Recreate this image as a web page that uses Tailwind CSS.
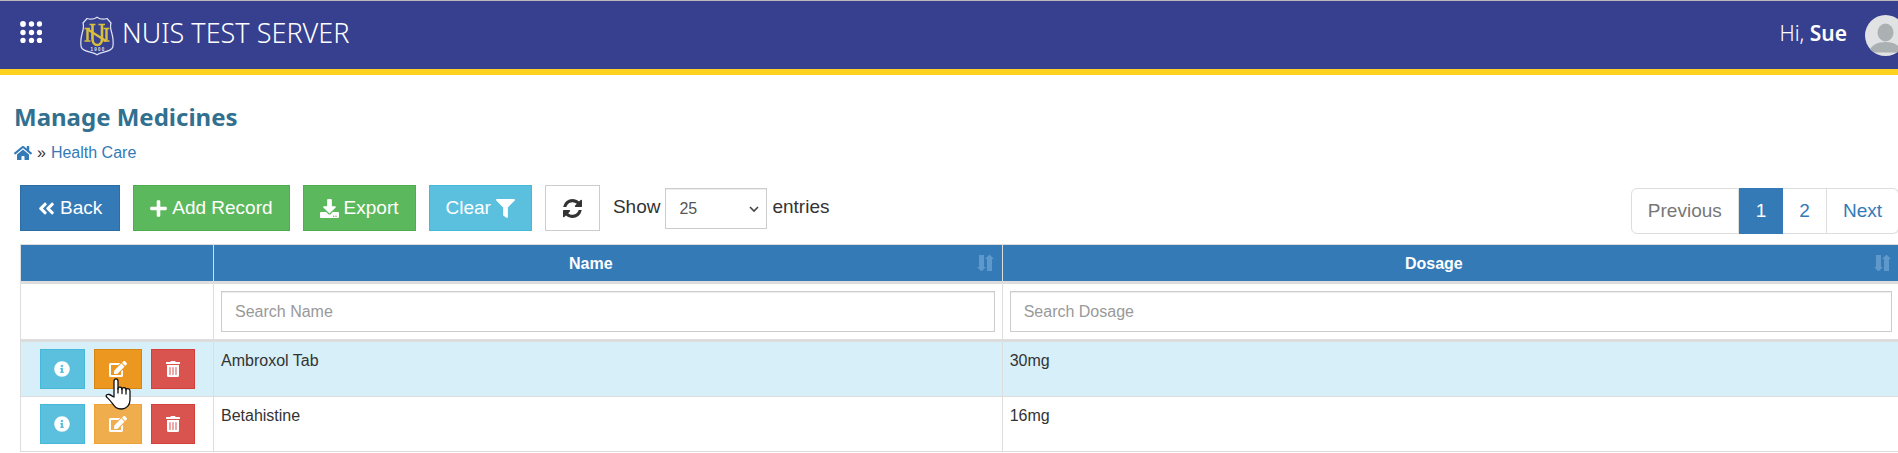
<!DOCTYPE html>
<html lang="en">
<head>
<meta charset="utf-8">
<title>Manage Medicines</title>
<script src="https://cdn.jsdelivr.net/npm/@tailwindcss/browser@4"></script>
</head>
<body class="bg-white text-[#333] font-['Liberation_Sans',Arial,sans-serif] text-base overflow-x-hidden">
<svg class="hidden" aria-hidden="true">
  <symbol id="info" viewBox="0 0 512 512"><path d="M256 8C119.043 8 8 119.083 8 256c0 136.997 111.043 248 248 248s248-111.003 248-248C504 119.083 392.957 8 256 8zm0 110c23.196 0 42 18.804 42 42s-18.804 42-42 42-42-18.804-42-42 18.804-42 42-42zm56 254c0 6.627-5.373 12-12 12h-88c-6.627 0-12-5.373-12-12v-24c0-6.627 5.373-12 12-12h12v-64h-12c-6.627 0-12-5.373-12-12v-24c0-6.627 5.373-12 12-12h64c6.627 0 12 5.373 12 12v100h12c6.627 0 12 5.373 12 12v24z"/></symbol>
  <symbol id="edit" viewBox="0 0 576 512"><path d="M402.6 83.2l90.2 90.2c3.8 3.8 3.8 10 0 13.8L274.4 405.6l-92.8 10.3c-12.4 1.4-22.9-9.1-21.5-21.5l10.3-92.8L388.8 83.2c3.8-3.8 10-3.8 13.8 0zm162-22.9l-48.8-48.8c-15.2-15.2-39.9-15.2-55.2 0l-35.4 35.4c-3.8 3.8-3.8 10 0 13.8l90.2 90.2c3.8 3.8 10 3.8 13.8 0l35.4-35.4c15.2-15.3 15.2-40 0-55.2zM384 346.2V448H64V128h229.8c3.2 0 6.2-1.3 8.5-3.5l40-40c7.6-7.6 2.2-20.5-8.5-20.5H48C21.5 64 0 85.5 0 112v352c0 26.5 21.5 48 48 48h352c26.5 0 48-21.5 48-48V306.2c0-10.7-12.9-16-20.5-8.5l-40 40c-2.2 2.3-3.5 5.3-3.5 8.5z"/></symbol>
  <symbol id="trash" viewBox="0 0 448 512"><path d="M32 464a48 48 0 0 0 48 48h288a48 48 0 0 0 48-48V128H32zm272-256a16 16 0 0 1 32 0v224a16 16 0 0 1-32 0zm-96 0a16 16 0 0 1 32 0v224a16 16 0 0 1-32 0zm-96 0a16 16 0 0 1 32 0v224a16 16 0 0 1-32 0zM432 32H312l-9.4-18.7A24 24 0 0 0 281.1 0H166.8a23.72 23.72 0 0 0-21.4 13.3L136 32H16A16 16 0 0 0 0 48v32a16 16 0 0 0 16 16h416a16 16 0 0 0 16-16V48a16 16 0 0 0-16-16z"/></symbol>
  <symbol id="sort" viewBox="0 0 17 16"><path d="M2 0h5v12h2l-4 4h-1L0 12h2zM10 16V4H8l4-4h1L17 4h-2v12z"/></symbol>
</svg>

<header class="flex items-start border-t border-t-[#b9b9b9] border-b-6 border-b-[#ffd21f] bg-[#36408f] h-[75px] pl-5 text-white font-['Noto_Sans','Open_Sans',sans-serif]">
  <button class="mt-5" aria-label="Applications">
    <svg class="size-[22px]" viewBox="0 0 22 22" fill="#fff"><circle cx="3" cy="3" r="2.900"/><circle cx="11.500" cy="3" r="2.700"/><circle cx="19.500" cy="3" r="2.700"/><circle cx="3" cy="11.500" r="2.700"/><circle cx="11.500" cy="11.500" r="2.700"/><circle cx="19.500" cy="11.500" r="2.700"/><circle cx="3" cy="19.500" r="2.700"/><circle cx="11.500" cy="19.500" r="2.700"/><circle cx="19.500" cy="19.500" r="2.700"/></svg>
  </button>
  <a href="#" class="ml-[38px] mt-3.5 flex">
    <svg class="mt-px w-[34px] h-10" viewBox="0 0 34 40" fill="none">
      <path d="M17 1.200C14.500 3 10 3.500 7 2.500L3 7C4 10 3.500 13 2.200 17C.8 22 .5 27 1.200 31C3 36.500 13 35.500 17 38.800C21 35.500 31 36.500 32.800 31C33.500 27 33.200 22 31.800 17C30.500 13 30 10 31 7L27 2.500C24 3.500 19.500 3 17 1.200Z" stroke="#dfe3f3" stroke-width="1.200"/>
      <g stroke="#d9bf3c"><path d="M7.500 13V24.500M26.500 13V24.500" stroke-width="2.400"/><path d="M4.500 12.500H10M4.500 25H10.500M23.500 12.500H29.500M23.500 25H29.500M9.500 8.500H15.500M18.500 8.500H25" stroke-width="1.300"/><path d="M12.500 9V23C12.500 31 22 31 22 23V9" stroke-width="2.600"/><path d="M7 13L26 25" stroke-width="2.200"/></g>
      <text x="17.500" y="35" text-anchor="middle" font-size="4.500" font-weight="700" fill="#dfe3f3" font-family="Liberation Sans">1 9 0 0</text>
    </svg>
    <span class="ml-2 text-[27px] leading-9 font-light">NUIS TEST SERVER</span>
  </a>
  <div class="ml-auto -mr-2 mt-3.5 flex shrink-0">
    <span class="mt-1 mr-[18px] text-[21px] leading-7 font-light">Hi, <b class="font-semibold">Sue</b></span>
    <svg class="size-[41px] rounded-full" viewBox="0 0 41 41"><path d="M0 0h41v41H0z" fill="#e1e2e3"/><ellipse cx="20.500" cy="17.500" rx="8" ry="9" fill="#abb0b3"/><path d="M4 37.500C5 30 13 27 20.500 27S36 30 37 37.500z" fill="#abb0b3"/></svg>
  </div>
</header>

<main class="pl-5 -mr-0.5">
  <div class="-ml-1.5 pt-6">
    <h1 class="text-2xl leading-9 font-bold text-[#31708f] font-['Noto_Sans','Open_Sans',sans-serif]">Manage Medicines</h1>
    <nav class="mt-1.5 flex items-center leading-6 gap-[5px]" aria-label="Breadcrumb">
      <a href="#" aria-label="Home" class="text-[#337ab7]"><svg class="w-[18px] h-4" viewBox="0 0 576 512" fill="currentColor"><path d="M280.370 148.260L96 300.110V464a16 16 0 0 0 16 16l112.060-.29a16 16 0 0 0 15.920-16V368a16 16 0 0 1 16-16h64a16 16 0 0 1 16 16v95.640a16 16 0 0 0 16 16.050L464 480a16 16 0 0 0 16-16V300L295.670 148.260a12.190 12.190 0 0 0-15.300 0zM571.600 251.470L488 182.560V44.050a12 12 0 0 0-12-12h-56a12 12 0 0 0-12 12v72.610L318.470 43a48 48 0 0 0-61 0L4.340 251.470a12 12 0 0 0-1.600 16.900l25.500 31A12 12 0 0 0 45.150 301l235.220-193.740a12.190 12.190 0 0 1 15.300 0L530.900 301a12 12 0 0 0 16.900-1.600l25.500-31a12 12 0 0 0-1.700-16.930z"/></svg></a>
      <span>»</span>
      <a href="#" class="text-[#337ab7]">Health Care</a>
    </nav>
  </div>

  <div class="mt-5 mb-2.5 flex items-start justify-between text-[19px]">
    <div class="flex items-start gap-[13px] text-white">
      <button class="h-[46px] px-[17px] flex items-center gap-[5px] border border-[#2e6da4] bg-[#337ab7]"><svg class="w-[17px] h-[19px]" viewBox="0 0 448 512" fill="currentColor"><path d="M223.700 239l136-136c9.400-9.400 24.600-9.400 33.900 0l22.600 22.600c9.400 9.400 9.400 24.600 0 33.900L319.900 256l96.400 96.400c9.400 9.400 9.400 24.600 0 33.900L393.700 409c-9.400 9.400-24.600 9.400-33.900 0l-136-136c-9.500-9.400-9.500-24.600-.1-34zm-192 34l136 136c9.400 9.400 24.600 9.400 33.900 0l22.600-22.600c9.400-9.400 9.400-24.600 0-33.900L127.900 256l96.400-96.400c9.400-9.400 9.400-24.600 0-33.900L201.700 103c-9.400-9.400-24.600-9.400-33.900 0l-136 136c-9.500 9.400-9.500 24.600-.1 34z"/></svg>Back</button>
      <button class="h-[46px] px-4 flex items-center gap-[5px] border border-[#4cae4c] bg-[#5cb85c]"><svg class="w-[17px] h-[19px]" viewBox="0 0 448 512" fill="currentColor"><path d="M416 208H272V64c0-17.670-14.330-32-32-32h-32c-17.670 0-32 14.330-32 32v144H32c-17.670 0-32 14.330-32 32v32c0 17.670 14.330 32 32 32h144v144c0 17.670 14.330 32 32 32h32c17.670 0 32-14.330 32-32V304h144c17.670 0 32-14.330 32-32v-32c0-17.670-14.330-32-32-32z"/></svg>Add Record</button>
      <button class="h-[46px] px-4 flex items-center gap-[5px] border border-[#4cae4c] bg-[#5cb85c]"><svg class="size-[19px]" viewBox="0 0 512 512" fill="currentColor"><path d="M216 0h80c13.300 0 24 10.700 24 24v168h87.700c17.800 0 26.700 21.500 14.100 34.100L269.700 378.300c-7.500 7.500-19.800 7.500-27.300 0L90.100 226.100c-12.600-12.600-3.700-34.100 14.100-34.100H192V24c0-13.300 10.700-24 24-24zm296 376v112c0 13.300-10.700 24-24 24H24c-13.300 0-24-10.700-24-24V376c0-13.300 10.700-24 24-24h146.700l49 49c20.100 20.100 52.500 20.100 72.600 0l49-49H488c13.300 0 24 10.700 24 24zm-124 88c0-11-9-20-20-20s-20 9-20 20 9 20 20 20 20-9 20-20zm64 0c0-11-9-20-20-20s-20 9-20 20 9 20 20 20 20-9 20-20z"/></svg>Export</button>
      <button class="h-[46px] px-4 flex items-center gap-[5px] border border-[#46b8da] bg-[#5bc0de]">Clear<svg class="size-[19px]" viewBox="0 0 512 512" fill="currentColor"><path d="M487.976 0H24.028C2.710 0-8.047 25.866 7.058 40.971L192 225.941V432c0 7.831 3.821 15.170 10.237 19.662l80 55.980C298.020 518.690 320 507.493 320 487.980V225.941l184.947-184.970C520.021 25.896 509.338 0 487.976 0z"/></svg></button>
      <button class="h-[46px] px-[17px] flex items-center border border-[#ccc] bg-white text-[#333]" aria-label="Refresh"><svg class="size-[19px]" viewBox="0 128 1536 1536" fill="currentColor"><path d="M1511 1056q0 5-1 7-64 268-268 434.500t-478 166.500q-146 0-282.500-55t-243.500-157l-129 129q-19 19-45 19t-45-19-19-45v-448q0-26 19-45t45-19h448q26 0 45 19t19 45-19 45l-137 137q71 66 161 102t187 36q134 0 250-65t186-179q11-17 53-117 8-23 30-23h192q13 0 22.500 9.500t9.500 22.500zm25-800v448q0 26-19 45t-45 19h-448q-26 0-45-19t-19-45 19-45l138-138q-148-137-349-137-134 0-250 65t-186 179q-11 17-53 117-8 23-30 23h-199q-13 0-22.500-9.500t-9.500-22.500v-7q65-268 270-434.500t480-166.500q146 0 284 55.500t245 156.500l130-129q19-19 45-19t45 19 19 45z"/></svg></button>
      <label class="pt-[3px] flex items-center gap-[5px] text-[#333]"><span class="pb-[3px]">Show</span>
        <span class="relative flex">
          <select class="appearance-none w-[102px] h-[41px] border border-[#ccc] bg-white pl-[13px] text-base text-[#555] shadow-[inset_0_1px_1px_rgba(0,0,0,0.075)]"><option>25</option><option>50</option></select>
          <svg class="absolute right-2 top-[18px] w-[10px] h-[7px] pointer-events-none" viewBox="0 0 10 7" fill="none" stroke="#444" stroke-width="1.600"><path d="M1 1l4 4 4-4"/></svg>
        </span>
        <span class="pb-[3px]">entries</span>
      </label>
    </div>
    <nav class="mt-[3px] mr-px flex h-[46px] leading-[44px]" aria-label="Pages">
      <a href="#" class="border border-[#ddd] rounded-l-md px-4 text-[#777]">Previous</a>
      <a href="#" class="border border-[#337ab7] bg-[#337ab7] px-4 text-white" aria-current="page">1</a>
      <a href="#" class="border-y border-r border-[#ddd] px-4 text-[#337ab7]">2</a>
      <a href="#" class="border-y border-r border-[#ddd] rounded-r-md px-4 text-[#337ab7]">Next</a>
    </nav>
  </div>

  <table class="w-full table-fixed border-separate border-spacing-0 border-t border-[#ddd] leading-[23px]">
    <colgroup><col class="w-[194px]"><col class="w-[41.95%]"><col></colgroup>
    <thead>
      <tr class="bg-[#337ab7] text-white h-[39px]">
        <th class="border-x border-b-3 border-[#ddd]"></th>
        <th class="border-r border-b-3 border-[#ddd] p-0"><div class="flex items-center pl-[7px] pr-2"><span class="grow text-center">Name</span><svg class="w-[17px] h-4 ml-4" fill="#5f98ca"><use href="#sort"/></svg></div></th>
        <th class="border-r border-b-3 border-[#ddd] p-0"><div class="flex items-center pl-[7px] pr-2"><span class="grow text-center">Dosage</span><svg class="w-[17px] h-4 ml-4" fill="#5f98ca"><use href="#sort"/></svg></div></th>
      </tr>
      <tr class="h-[58px]">
        <td class="border-x border-b-3 border-[#ddd]"></td>
        <td class="border-r border-b-3 border-[#ddd] p-[7px]"><input aria-label="Search Name" placeholder="Search Name" class="block w-full h-[41px] border border-[#ccc] px-[13px] text-[#555] placeholder:text-[#999] shadow-[inset_0_1px_1px_rgba(0,0,0,0.075)]"></td>
        <td class="border-r border-b-3 border-[#ddd] p-[7px]"><input aria-label="Search Dosage" placeholder="Search Dosage" class="block w-full h-[41px] border border-[#ccc] px-[13px] text-[#555] placeholder:text-[#999] shadow-[inset_0_1px_1px_rgba(0,0,0,0.075)]"></td>
      </tr>
    </thead>
    <tbody class="align-top">
      <tr class="bg-[#d7eff9]">
        <td class="border-x border-b border-[#ddd] p-[7px]">
          <div class="flex justify-center gap-[9px] text-white">
            <button aria-label="Details" class="h-10 w-[45px] flex items-center justify-center border border-[#46b8da] bg-[#5bc0de]"><svg class="size-4" fill="currentColor"><use href="#info"/></svg></button>
            <button aria-label="Edit" class="relative h-10 w-12 flex items-center justify-center border border-[#d58512] bg-[#ec971f]"><svg class="w-[18px] h-4" fill="currentColor"><use href="#edit"/></svg>
              <svg class="absolute left-[10px] top-[28px] w-[26px] h-8" viewBox="0 0 26 32" fill="#fff" stroke="#111" stroke-width="1.300" stroke-linejoin="round" stroke-linecap="round"><path d="M9 19V3.200C9 .2 13 .2 13 3.200V11C13 8.500 17 8.500 17 11.500C17 9 21 9 21 12C21 10 25 10.200 25 13V22C25 27 21.500 31 16.500 31C11 31 9.500 28.500 7 25C5 22 3 20.500 1.400 18.700C.5 17 2.500 16 4.300 16.500C6 17 7.500 18.500 9 19Z"/><path d="M13 10.500V15M17 11.500V15.500M21 12V16"/></svg>
            </button>
            <button aria-label="Delete" class="h-10 w-11 flex items-center justify-center border border-[#d43f3a] bg-[#d9534f]"><svg class="w-3.5 h-4" fill="currentColor"><use href="#trash"/></svg></button>
          </div>
        </td>
        <td class="border-r border-b border-[#ddd] p-[7px]">Ambroxol Tab</td>
        <td class="border-r border-b border-[#ddd] p-[7px]">30mg</td>
      </tr>
      <tr>
        <td class="border-x border-b border-[#ddd] p-[7px]">
          <div class="flex justify-center gap-[9px] text-white">
            <button aria-label="Details" class="h-10 w-[45px] flex items-center justify-center border border-[#46b8da] bg-[#5bc0de]"><svg class="size-4" fill="currentColor"><use href="#info"/></svg></button>
            <button aria-label="Edit" class="h-10 w-12 flex items-center justify-center border border-[#eea236] bg-[#f0ad4e]"><svg class="w-[18px] h-4" fill="currentColor"><use href="#edit"/></svg></button>
            <button aria-label="Delete" class="h-10 w-11 flex items-center justify-center border border-[#d43f3a] bg-[#d9534f]"><svg class="w-3.5 h-4" fill="currentColor"><use href="#trash"/></svg></button>
          </div>
        </td>
        <td class="border-r border-b border-[#ddd] p-[7px]">Betahistine</td>
        <td class="border-r border-b border-[#ddd] p-[7px]">16mg</td>
      </tr>
    </tbody>
  </table>
</main>
</body>
</html>
